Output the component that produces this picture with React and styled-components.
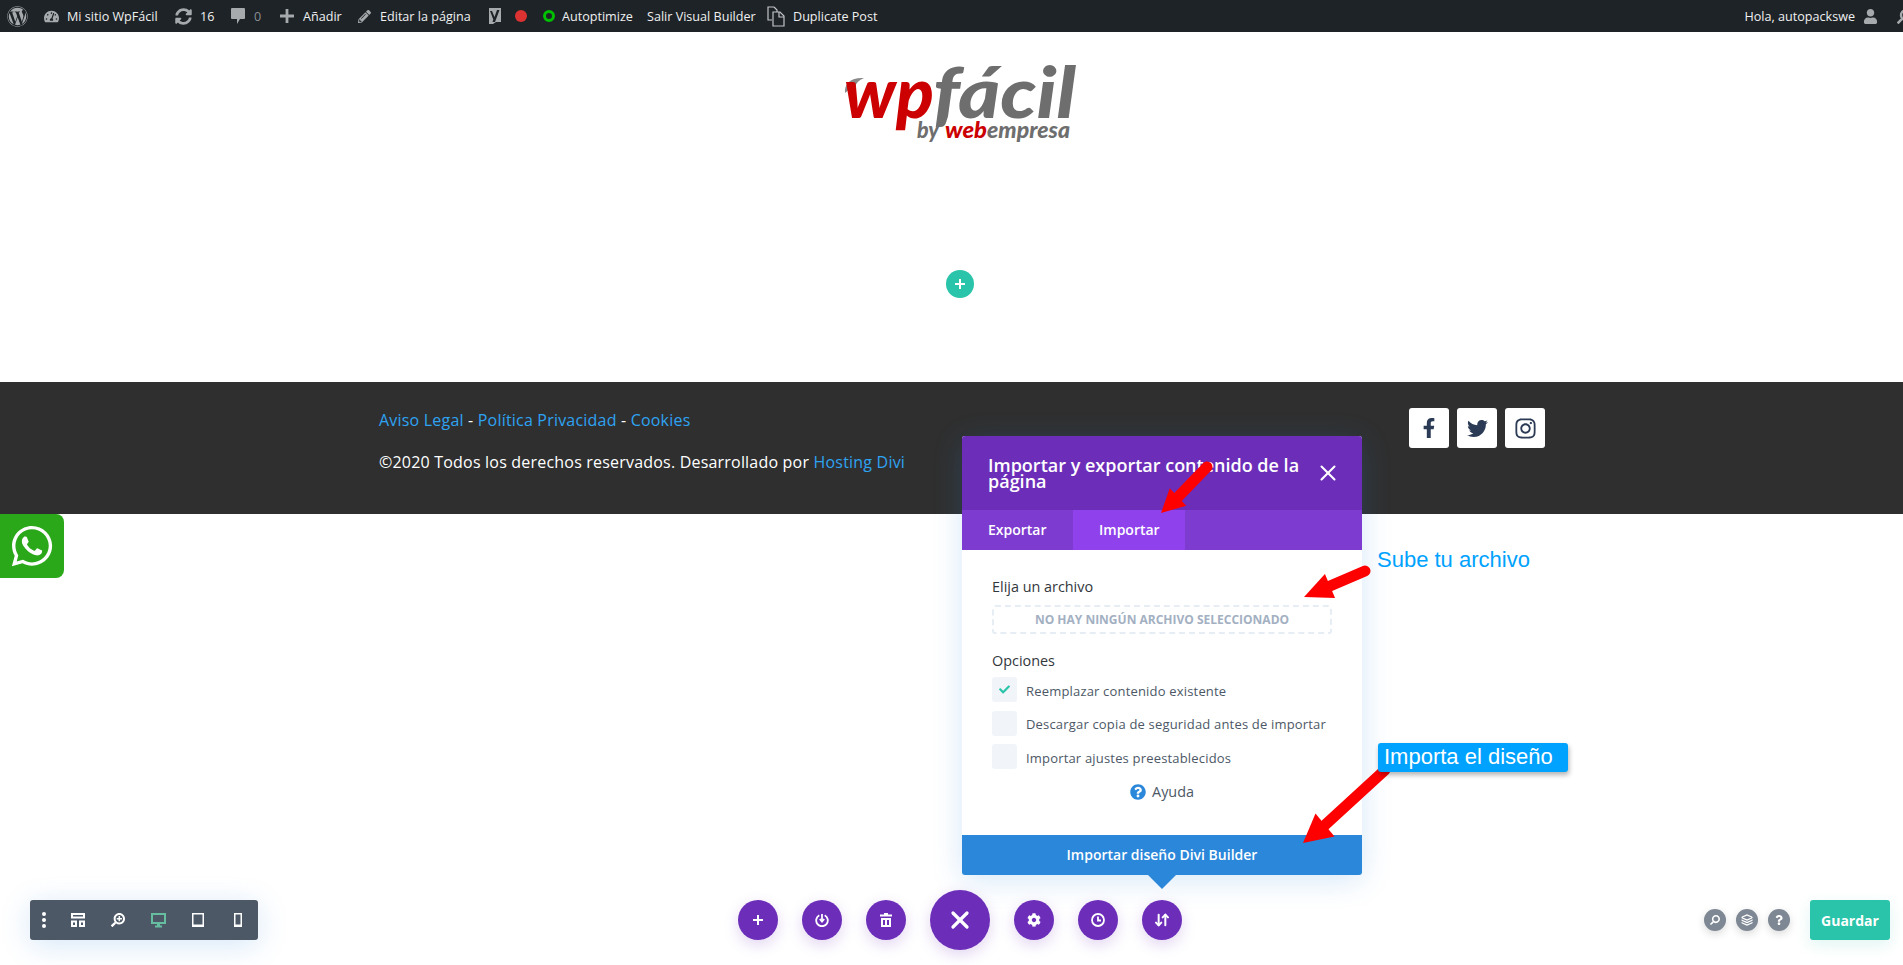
import React from 'react'
import styled, { createGlobalStyle } from 'styled-components'
import {
  FaWordpress, FaTachometerAlt, FaSyncAlt, FaPencilAlt, FaUser,
  FaFacebookF, FaTwitter, FaInstagram, FaWhatsapp,
  FaCog, FaCheck, FaQuestion, FaQuestionCircle, FaSearchPlus, FaSearch,
} from 'react-icons/fa'
import { ArrowDownUp, Layers, X } from 'lucide-react'

const GlobalStyle = createGlobalStyle`
  html, body {
    margin: 0;
    padding: 0;
    height: 965px;
    overflow: hidden;
    background: #fff;
    font-family: "Open Sans", "Liberation Sans", sans-serif;
  }
  * { box-sizing: border-box; }
`

const App = () => (
  <Page>
    <GlobalStyle />
    <AdminBar>
      <AdminGroup>
        <AdminItem $gap={0} $width={37}><FaWordpress size={21} color="#a7aaad" /></AdminItem>
        <AdminItem $gap={8} $width={131}><FaTachometerAlt size={15} color="#a7aaad" />Mi sitio WpFácil</AdminItem>
        <AdminItem $gap={8} $width={56}><FaSyncAlt size={17} color="#a7aaad" />16</AdminItem>
        <AdminItem $gap={9} $width={49} $muted><CommentIcon />0</AdminItem>
        <AdminItem $gap={9} $width={78}><PlusIcon color="#a7aaad" size={14} />Añadir</AdminItem>
        <AdminItem $gap={9} $width={129}><FaPencilAlt size={13} color="#a7aaad" />Editar la página</AdminItem>
        <AdminItem $gap={0} $width={28}><YoastIcon /></AdminItem>
        <AdminItem $gap={0} $width={28}><RedDot /></AdminItem>
        <AdminItem $gap={7} $width={104}><GreenRing />Autoptimize</AdminItem>
        <AdminItem $gap={0} $width={120}>Salir Visual Builder</AdminItem>
        <AdminItem $gap={8}><DuplicateIcon />Duplicate Post</AdminItem>
      </AdminGroup>
      <AdminGroup>
        <AdminItem $gap={8}>Hola, autopackswe<FaUser size={15} color="#a7aaad" /></AdminItem>
        <AdminSearch><Flip><FaSearch size={15} color="#a7aaad" /></Flip></AdminSearch>
      </AdminGroup>
    </AdminBar>

    <Hero>
      <Logo />
      <AddButton><PlusIcon size={10} /></AddButton>
    </Hero>

    <Footer>
      <FooterText>
        <FooterLine>
          <FooterLink>Aviso Legal</FooterLink> - <FooterLink>Política Privacidad</FooterLink> - <FooterLink>Cookies</FooterLink>
        </FooterLine>
        <FooterLine>
          ©2020 Todos los derechos reservados. Desarrollado por <FooterLink>Hosting Divi</FooterLink>
        </FooterLine>
      </FooterText>
      <Socials>
        <SocialButton><FaFacebookF size={20} /></SocialButton>
        <SocialButton><FaTwitter size={21} /></SocialButton>
        <SocialButton><FaInstagram size={23} /></SocialButton>
      </Socials>
    </Footer>

    <WhatsApp><FaWhatsapp size={46} /></WhatsApp>

    <Modal>
      <ModalHeader>
        <ModalTitle>Importar y exportar contenido de la página</ModalTitle>
        <X size={26} strokeWidth={1.9} />
      </ModalHeader>
      <Tabs>
        <Tab>Exportar</Tab>
        <Tab $active>Importar</Tab>
      </Tabs>
      <ModalBody>
        <FieldLabel>Elija un archivo</FieldLabel>
        <FileBox>NO HAY NINGÚN ARCHIVO SELECCIONADO</FileBox>
        <FieldLabel $options>Opciones</FieldLabel>
        <CheckRow>
          <CheckBox><FaCheck size={11} color="#29c4a9" /></CheckBox>
          <CheckLabel>Reemplazar contenido existente</CheckLabel>
        </CheckRow>
        <CheckRow>
          <CheckBox />
          <CheckLabel>Descargar copia de seguridad antes de importar</CheckLabel>
        </CheckRow>
        <CheckRow>
          <CheckBox />
          <CheckLabel>Importar ajustes preestablecidos</CheckLabel>
        </CheckRow>
        <Help><FaQuestionCircle size={16} color="#2b87da" />Ayuda</Help>
      </ModalBody>
      <ImportButton>Importar diseño Divi Builder</ImportButton>
    </Modal>

    <ArrowLayer />

    <Note>Sube tu archivo</Note>
    <NoteBadge>Importa el diseño</NoteBadge>

    <ViewBar>
      <ViewIcon $first><DotsIcon /></ViewIcon>
      <ViewIcon><LayoutIcon /></ViewIcon>
      <ViewIcon><Flip><FaSearchPlus size={14} /></Flip></ViewIcon>
      <ViewIcon><DesktopIcon /></ViewIcon>
      <ViewIcon><TabletIcon /></ViewIcon>
      <ViewIcon><PhoneIcon /></ViewIcon>
    </ViewBar>

    <ActionBar>
      <RoundButton><PlusIcon size={10} /></RoundButton>
      <RoundButton><PowerIcon /></RoundButton>
      <RoundButton><TrashIcon /></RoundButton>
      <RoundButton $big><X size={28} strokeWidth={2.8} /></RoundButton>
      <RoundButton><FaCog size={14} /></RoundButton>
      <RoundButton><ClockIcon /></RoundButton>
      <RoundButton><ArrowDownUp size={16} strokeWidth={3} /></RoundButton>
    </ActionBar>

    <SaveBar>
      <GreyButton><Flip><FaSearch size={10} /></Flip></GreyButton>
      <GreyButton><Layers size={12} strokeWidth={2.5} /></GreyButton>
      <GreyButton><FaQuestion size={10} /></GreyButton>
      <SaveButton>Guardar</SaveButton>
    </SaveBar>
  </Page>
)

export default App

const PlusIcon = ({ size, color = '#fff' }) => (
  <svg width={size} height={size} viewBox="0 0 10 10" fill={color}>
    <path d="M4 0h2v4h4v2H6v4H4V6H0V4h4z" />
  </svg>
)

const CommentIcon = () => (
  <svg width="14" height="16" viewBox="0 0 14 16" fill="#a7aaad">
    <path d="M1 0h12a1 1 0 0 1 1 1v9a1 1 0 0 1-1 1H9l-3 5v-5H1a1 1 0 0 1-1-1V1a1 1 0 0 1 1-1z" />
  </svg>
)

const PowerIcon = () => (
  <svg width="14" height="14" viewBox="0 0 14 14" fill="none" stroke="#fff" strokeWidth="1.8">
    <path d="M4.300 2.300a5.800 5.800 0 1 0 5.400 0" />
    <path d="M7 1v7" />
    <path d="M4.800 6L7 8.600 9.200 6" />
  </svg>
)

const TrashIcon = () => (
  <svg width="12" height="14" viewBox="0 0 12 14" fill="#fff">
    <path d="M4 0h4v1.500h4V3.500H0V1.500h4z" />
    <path d="M1 5h10v9H1zM3 7v5h2V7zM7 7v5h2V7z" fillRule="evenodd" />
  </svg>
)

const ClockIcon = () => (
  <svg width="14" height="14" viewBox="0 0 14 14" fill="none" stroke="#fff" strokeWidth="1.8">
    <circle cx="7" cy="7" r="6" />
    <path d="M7 3.500V7.500H10" />
  </svg>
)

const YoastIcon = () => (
  <svg width="16" height="18" viewBox="0 0 16 18">
    <path d="M2 1h12v14H9l-3 2H2z" fill="#a7aaad" />
    <path d="M5 4l2.500 6L10 3h2.500L8 15H5.500l.8-2.500L3 4z" fill="#1d2327" />
  </svg>
)

const DuplicateIcon = () => (
  <svg width="18" height="21" viewBox="0 0 18 21" fill="none" stroke="#c3c4c7" strokeWidth="1.2">
    <path d="M7 1H1v13h4" />
    <path d="M7 1l3 3v2" />
    <path d="M6 6h7l4 4v10H6z" />
    <path d="M12 6v5h5" />
  </svg>
)

const Logo = () => (
  <LogoSvg viewBox="0 0 240 90" width="240" height="90">
    <path d="M5 33c-1-10 7-16 19-15-5 2-8 5-9 9-4 1-7 3-10 6z" fill="#8a8a8a" />
    <LogoText x="4" y="58" fontSize="70" fill="#cc0000" textLength="90" lengthAdjust="spacingAndGlyphs">wp</LogoText>
    <LogoText x="93" y="58" fontSize="70" fill="#6e6e6e" textLength="143" lengthAdjust="spacingAndGlyphs">fácil</LogoText>
    <LogoText x="77" y="78" fontSize="22" fill="#6e6e6e" textLength="22" lengthAdjust="spacingAndGlyphs">by</LogoText>
    <LogoText x="105" y="78" fontSize="22" fill="#cc0000" textLength="42" lengthAdjust="spacingAndGlyphs">web</LogoText>
    <LogoText x="147" y="78" fontSize="22" fill="#6e6e6e" textLength="83" lengthAdjust="spacingAndGlyphs">empresa</LogoText>
  </LogoSvg>
)

const arrows = [
  { tail: [1207, 467], neck: [1178, 497], tip: [1161, 513], wing: 12 },
  { tail: [1365, 571], neck: [1330, 586], tip: [1304, 597], wing: 13 },
  { tail: [1385, 770], neck: [1325, 825], tip: [1303, 843], wing: 15 },
]

const ArrowLayer = () => (
  <ArrowSvg viewBox="0 0 1903 965" width="1903" height="965">
    {arrows.map(({ tail, neck, tip, wing }) => {
      const dx = tip[0] - neck[0]
      const dy = tip[1] - neck[1]
      const len = Math.hypot(dx, dy)
      const nx = (-dy / len) * wing
      const ny = (dx / len) * wing
      return (
        <g key={tail[0]}>
          <line x1={tail[0]} y1={tail[1]} x2={neck[0]} y2={neck[1]} stroke="#fe0000" strokeWidth="11" strokeLinecap="round" />
          <polygon
            points={`${neck[0] + nx},${neck[1] + ny} ${neck[0] - nx},${neck[1] - ny} ${tip[0]},${tip[1]}`}
            fill="#fe0000"
          />
        </g>
      )
    })}
  </ArrowSvg>
)

const DotsIcon = () => (
  <svg width="4" height="16" viewBox="0 0 4 16" fill="#fff">
    <circle cx="2" cy="2" r="2" />
    <circle cx="2" cy="8" r="2" />
    <circle cx="2" cy="14" r="2" />
  </svg>
)

const LayoutIcon = () => (
  <svg width="14" height="14" viewBox="0 0 14 14" fill="none" stroke="#fff" strokeWidth="2">
    <rect x="1" y="1" width="12" height="3.500" />
    <rect x="1" y="8.500" width="4" height="4.500" />
    <rect x="9" y="8.500" width="4" height="4.500" />
  </svg>
)

const DesktopIcon = () => (
  <svg width="15" height="15" viewBox="0 0 15 15" fill="#66bd9f">
    <path d="M0 0h15v11H9v1.500h2V14.500H4V12.500h2V11H0zM2 2v7h11V2z" fillRule="evenodd" />
  </svg>
)

const TabletIcon = () => (
  <svg width="12" height="14" viewBox="0 0 12 14" fill="#fff">
    <path d="M0 0h12v14H0zM1.500 1.500v10h9v-10z" fillRule="evenodd" />
  </svg>
)

const PhoneIcon = () => (
  <svg width="8" height="14" viewBox="0 0 8 14" fill="#fff">
    <path d="M0 0h8v14H0zM1.500 1.500v10h5v-10z" fillRule="evenodd" />
  </svg>
)

const Page = styled.div`
  position: relative;
  width: 1903px;
  height: 965px;
  overflow: hidden;
  background: #fff;
`

const AdminBar = styled.div`
  display: flex;
  justify-content: space-between;
  height: 32px;
  padding: 0 0 0 7px;
  background: #1d2327;
  color: #f0f0f1;
  font-size: 12.600px;
`

const AdminGroup = styled.div`
  display: flex;
  align-items: center;
`

const AdminItem = styled.div`
  display: flex;
  align-items: center;
  gap: ${(p) => p.$gap}px;
  width: ${(p) => (p.$width ? `${p.$width}px` : 'auto')};
  flex-shrink: 0;
  white-space: nowrap;
  color: ${(p) => (p.$muted ? '#8c8f94' : '#f0f0f1')};
`

const AdminSearch = styled.div`
  display: flex;
  width: 6px;
  margin-left: 19px;
  overflow: hidden;
`

const RedDot = styled.span`
  width: 12px;
  height: 12px;
  border-radius: 50%;
  background: #dc3232;
`

const GreenRing = styled.span`
  width: 12px;
  height: 12px;
  border-radius: 50%;
  border: 3px solid #00c000;
`

const Hero = styled.div`
  display: flex;
  flex-direction: column;
  align-items: center;
  height: 350px;
  padding: 28px 0 0 17px;
`

const LogoSvg = styled.svg`
  display: block;
  overflow: visible;
`

const LogoText = styled.text`
  font-family: Lato, "Open Sans", sans-serif;
  font-weight: 900;
  font-style: italic;
`

const AddButton = styled.div`
  display: flex;
  align-items: center;
  justify-content: center;
  width: 28px;
  height: 28px;
  margin-top: 120px;
  border-radius: 50%;
  background: #29c4a9;
  color: #fff;
`

const Footer = styled.div`
  display: flex;
  justify-content: space-between;
  height: 132px;
  padding: 25px 358px 0 379px;
  background: #2f2f2f;
`

const FooterText = styled.div`
  display: flex;
  flex-direction: column;
  gap: 15px;
  color: #fff;
  font-size: 16px;
  font-weight: 500;
  letter-spacing: 0.2px;
  line-height: 27px;
`

const FooterLine = styled.div`
  white-space: nowrap;
`

const FooterLink = styled.span`
  color: #2ea3f2;
`

const Socials = styled.div`
  display: flex;
  gap: 8px;
  margin-top: 1px;
`

const SocialButton = styled.div`
  display: flex;
  align-items: center;
  justify-content: center;
  width: 40px;
  height: 40px;
  border-radius: 3px;
  background: #fff;
  color: #2b3a55;
`

const WhatsApp = styled.div`
  position: absolute;
  left: 0;
  top: 514px;
  display: flex;
  align-items: center;
  justify-content: center;
  width: 64px;
  height: 64px;
  border-radius: 0 8px 8px 0;
  background: #2aa81a;
  color: #fff;
`

const Modal = styled.div`
  position: absolute;
  left: 962px;
  top: 436px;
  display: flex;
  flex-direction: column;
  width: 400px;
  height: 439px;
  border-radius: 3px;
  background: #fff;
  box-shadow: 0 5px 30px rgba(43, 135, 218, 0.2);

  &::after {
    content: '';
    position: absolute;
    left: 186px;
    bottom: -14px;
    border-left: 14px solid transparent;
    border-right: 14px solid transparent;
    border-top: 14px solid #2b87da;
  }
`

const ModalHeader = styled.div`
  display: flex;
  align-items: center;
  justify-content: space-between;
  height: 74px;
  padding: 0 21px 0 26px;
  border-radius: 3px 3px 0 0;
  background: #6c2eb9;
  color: #fff;
`

const ModalTitle = styled.div`
  width: 325px;
  font-size: 18px;
  font-weight: 600;
  line-height: 16px;
`

const Tabs = styled.div`
  display: flex;
  height: 40px;
  background: #7e3bd0;
`

const Tab = styled.div`
  display: flex;
  align-items: center;
  width: ${(p) => (p.$active ? 112 : 111)}px;
  padding: 0 0 2px 26px;
  background: ${(p) => (p.$active ? '#8f42ec' : 'transparent')};
  color: #fff;
  font-size: 14px;
  font-weight: 600;
`

const ModalBody = styled.div`
  flex: 1;
  padding: 27px 30px 0;
`

const FieldLabel = styled.div`
  margin-top: ${(p) => (p.$options ? 17 : 0)}px;
  margin-bottom: ${(p) => (p.$options ? 7 : 9)}px;
  color: #32373c;
  font-size: 14.400px;
  line-height: 19px;
`

const FileBox = styled.div`
  display: flex;
  align-items: center;
  justify-content: center;
  height: 29px;
  border: 2px dashed #e6edf4;
  border-radius: 3px;
  color: #a3b0c2;
  font-size: 12px;
  font-weight: 700;
`

const CheckRow = styled.div`
  display: flex;
  align-items: center;
  gap: 9px;
  height: 25px;
  margin-bottom: 8.500px;
`

const CheckLabel = styled.span`
  padding-top: 2px;
  color: #4c5866;
  font-size: 13px;
  font-weight: 500;
  letter-spacing: 0.18px;
  white-space: nowrap;
`

const CheckBox = styled.div`
  display: flex;
  align-items: center;
  justify-content: center;
  width: 25px;
  height: 25px;
  border-radius: 3px;
  background: #f1f5f9;
`

const Help = styled.div`
  display: flex;
  align-items: center;
  justify-content: center;
  gap: 6px;
  margin-top: 13px;
  color: #4c5866;
  font-size: 14.400px;
  line-height: 20px;
`

const ImportButton = styled.div`
  display: flex;
  align-items: center;
  justify-content: center;
  height: 40px;
  padding-bottom: 2px;
  border-radius: 0 0 3px 3px;
  background: #2b87da;
  color: #fff;
  font-size: 14px;
  font-weight: 600;
`

const ArrowSvg = styled.svg`
  position: absolute;
  left: 0;
  top: 0;
  pointer-events: none;
`

const Note = styled.div`
  position: absolute;
  left: 1377px;
  top: 548px;
  color: #00a2ff;
  font-family: "Liberation Sans", sans-serif;
  font-size: 22px;
  line-height: 24px;
`

const NoteBadge = styled.div`
  position: absolute;
  left: 1378px;
  top: 743px;
  width: 190px;
  height: 29px;
  padding-left: 6px;
  border-radius: 3px;
  background: #00a2ff;
  box-shadow: 1px 3px 5px rgba(0, 0, 0, 0.3);
  color: #fff;
  font-family: "Liberation Sans", sans-serif;
  font-size: 22px;
  line-height: 27px;
  white-space: nowrap;
`

const ViewBar = styled.div`
  position: absolute;
  left: 30px;
  top: 900px;
  display: flex;
  align-items: center;
  width: 228px;
  height: 40px;
  border-radius: 3px;
  background: #4c5866;
  box-shadow: 0 5px 30px rgba(43, 135, 218, 0.2);
`

const ViewIcon = styled.div`
  display: flex;
  align-items: center;
  justify-content: center;
  width: ${(p) => (p.$first ? 28 : 40)}px;
  color: #fff;
`

const Flip = styled.span`
  display: flex;
  flex-shrink: 0;
  transform: scaleX(-1);
`

const ActionBar = styled.div`
  position: absolute;
  left: 738px;
  top: 890px;
  display: flex;
  align-items: center;
  gap: 24px;
`

const RoundButton = styled.div`
  display: flex;
  align-items: center;
  justify-content: center;
  width: ${(p) => (p.$big ? 60 : 40)}px;
  height: ${(p) => (p.$big ? 60 : 40)}px;
  border-radius: 50%;
  background: #6c2eb9;
  box-shadow: 0 5px 15px rgba(108, 46, 185, 0.2);
  color: #fff;
`

const SaveBar = styled.div`
  position: absolute;
  left: 1704px;
  top: 900px;
  display: flex;
  align-items: center;
  gap: 10px;
`

const GreyButton = styled.div`
  display: flex;
  align-items: center;
  justify-content: center;
  width: 22px;
  height: 22px;
  border-radius: 50%;
  background: #7e8794;
  box-shadow: 0 3px 8px rgba(0, 0, 0, 0.15);
  color: #fff;
`

const SaveButton = styled.div`
  display: flex;
  align-items: center;
  justify-content: center;
  width: 80px;
  height: 40px;
  margin-left: 10px;
  border-radius: 3px;
  background: #29c4a9;
  box-shadow: 0 5px 15px rgba(41, 196, 169, 0.15);
  color: #fff;
  font-size: 14px;
  font-weight: 700;
`
